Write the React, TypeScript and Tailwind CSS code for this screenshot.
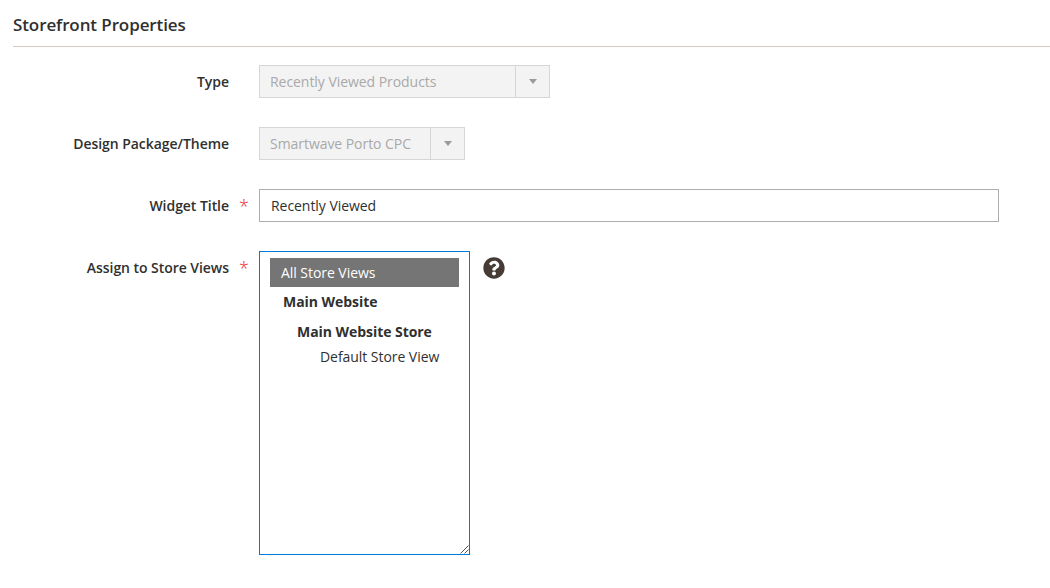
import { FaQuestionCircle } from "react-icons/fa";

export default function App() {
  const font = { fontFamily: '"Open Sans", sans-serif' };
  return (
    <div className="w-[1050px] h-[588px] bg-white overflow-hidden text-[14px] tracking-[-0.05px] text-[#303030]" style={font}>
      <div className="pl-[13px] pt-[13px]">
        <h2 className="text-[17px] tracking-[-0.1px] leading-[24px] font-semibold text-[#303030] pb-[9px] border-b border-[#d5cbbf]">Storefront Properties</h2>
      </div>

      <div className="flex flex-col pt-[18px]">
        <div className="flex items-center h-[33px]">
          <label className="w-[229px] text-right font-semibold">Type</label>
          <div className="ml-[30px] w-[291px] h-[33px] flex border border-[#d6d6d6] bg-[#f3f3f3] text-[#a9a9a9]">
            <span className="flex-1 pl-[10px] leading-[31px]">Recently Viewed Products</span>
            <span className="w-[34px] border-l border-[#d6d6d6] flex items-center justify-center">
              <span className="w-0 h-0 border-x-[4px] border-x-transparent border-t-[5px] border-t-[#9a9a9a]" />
            </span>
          </div>
        </div>

        <div className="flex items-center h-[33px] mt-[29px]">
          <label className="w-[229px] text-right font-semibold">Design Package/Theme</label>
          <div className="ml-[30px] w-[206px] h-[33px] flex border border-[#d6d6d6] bg-[#f3f3f3] text-[#a9a9a9]">
            <span className="flex-1 pl-[10px] leading-[31px]">Smartwave Porto CPC</span>
            <span className="w-[34px] border-l border-[#d6d6d6] flex items-center justify-center">
              <span className="w-0 h-0 border-x-[4px] border-x-transparent border-t-[5px] border-t-[#9a9a9a]" />
            </span>
          </div>
        </div>

        <div className="flex items-center h-[33px] mt-[29px]">
          <label className="w-[229px] text-right font-semibold">Widget Title</label>
          <span className="w-[30px] pl-[10px] text-[#ee1c1c] text-[18px] font-light leading-none">*</span>
          <div className="w-[740px] h-[33px] border border-[#adadad] pl-[11px] leading-[31px]">Recently Viewed</div>
        </div>

        <div className="flex items-start mt-[29px]">
          <label className="w-[229px] text-right font-semibold pt-[6px]">Assign to Store Views</label>
          <span className="w-[30px] pl-[10px] pt-[8px] text-[#ee1c1c] text-[18px] font-light leading-none">*</span>
          <div className="relative w-[211px] h-[304px] border border-[#007bdb] p-[6px] pl-[10px]">
            <div className="w-[189px] h-[29px] pl-[11px] bg-[#757575] text-white leading-[29px]">All Store Views</div>
            <div className="pl-[13px] mt-[5px] font-bold leading-[20px]">Main Website</div>
            <div className="pl-[27px] mt-[10px] font-bold leading-[20px]">Main Website Store</div>
            <div className="pl-[50px] mt-[5px] leading-[20px]">Default Store View</div>
            <svg className="absolute right-0 bottom-0" width="9" height="9" viewBox="0 0 9 9">
              <path d="M8.5 0.5L0.5 8.5M8.5 4.5L4.5 8.5" stroke="#555" strokeWidth="1" fill="none" />
            </svg>
          </div>
          <FaQuestionCircle className="ml-[13px] mt-[6px] text-[#463c35]" size={22} />
        </div>
      </div>
    </div>
  );
}
